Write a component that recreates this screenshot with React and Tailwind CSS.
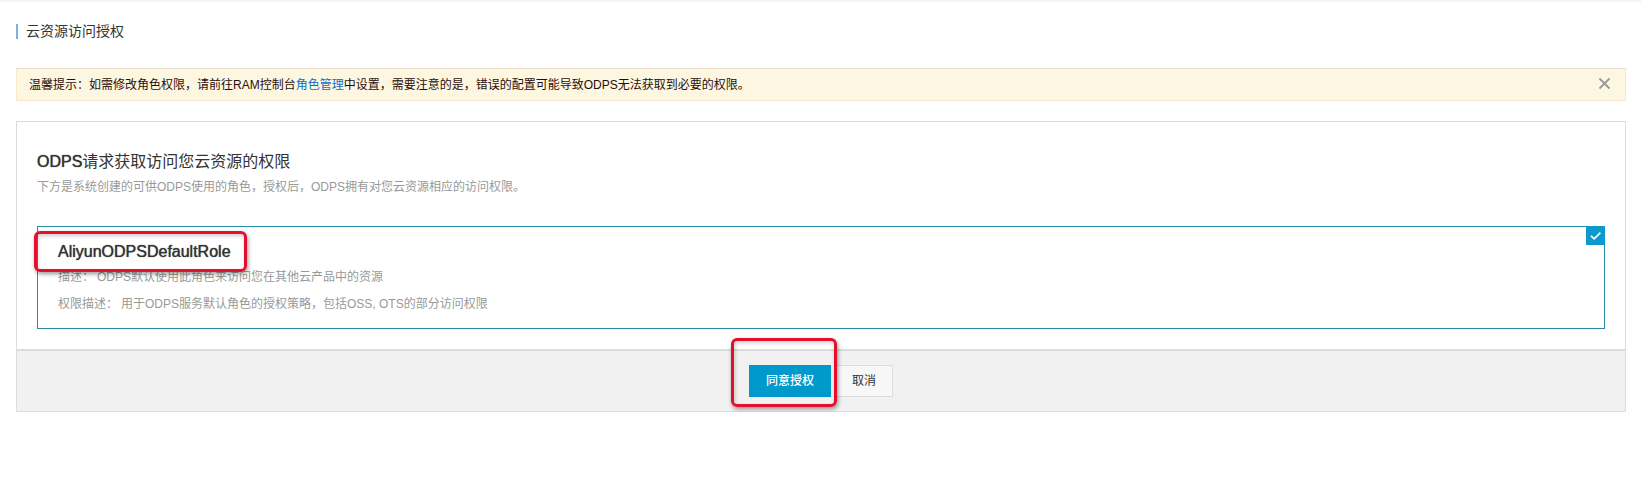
import React from "react";

function Highlight({ className }) {
  return (
    <span
      aria-hidden="true"
      className={`pointer-events-none absolute rounded-md border-3 border-[#e3102b] shadow-[1px_2px_4px_rgba(0,0,0,0.4),inset_1px_2px_4px_rgba(0,0,0,0.2)] ${className}`}
    />
  );
}

function Notice() {
  return (
    <div
      role="alert"
      className="mt-[27px] flex items-center justify-between border border-[#f7eacb] border-t-[#e6dcc9] bg-[#fdf7e2] pt-[7px] pb-[5px] pl-3 pr-[14px]"
    >
      <p className="text-xs leading-[19px] text-[#2b0d08]">
        温馨提示：如需修改角色权限，请前往RAM控制台
        <a href="#roles" className="text-[#0a6fc9]">角色管理</a>
        中设置，需要注意的是，错误的配置可能导致ODPS无法获取到必要的权限。
      </p>
      <button type="button" aria-label="关闭" className="pb-1 text-[#999]">
        <svg width="13" height="13" viewBox="0 0 13 13" fill="none" stroke="currentColor" strokeWidth="1.8">
          <path d="M1.5 1.5 11.5 11.5M11.5 1.5 1.5 11.5" />
        </svg>
      </button>
    </div>
  );
}

function RoleCard() {
  return (
    <section className="relative mt-[30px] border border-[#2a8ba6] px-5 pt-[13px] pb-[10px]">
      <h3 className="text-base leading-6 text-[#333] [text-shadow:0_0_1px_#333]">AliyunODPSDefaultRole</h3>
      <p className="text-xs leading-[27px] text-[#999]">
        描述：<span className="ml-[3px]">ODPS默认使用此角色来访问您在其他云产品中的资源</span>
      </p>
      <p className="text-xs leading-[27px] text-[#999]">
        权限描述：<span className="ml-[3px]">用于ODPS服务默认角色的授权策略，包括OSS, OTS的部分访问权限</span>
      </p>
      <span className="absolute -top-px -right-px flex size-[19px] items-center justify-center bg-[#0d9acb]">
        <svg width="12" height="10" viewBox="0 0 12 10" fill="none" stroke="#fff" strokeWidth="1.8">
          <path d="M1 4.8 4.2 7.8 10.4 1.6" />
        </svg>
      </span>
      <Highlight className="-left-1 top-1 h-[41px] w-[213px]" />
    </section>
  );
}

export default function App() {
  return (
    <main className="border-t-2 border-[#f3f3f3] bg-white pl-4 pr-[15px] pb-20 pt-[19px] font-['Liberation_Sans','Noto_Sans_CJK_SC',sans-serif]">
      <div className="flex items-center gap-2">
        <span className="h-[15px] w-[2px] bg-[#7fb1dc]" />
        <h1 className="text-sm leading-5 text-[#333]">云资源访问授权</h1>
      </div>

      <Notice />

      <div className="mt-5 border border-[#dcdcdc]">
        <div className="px-5 pt-7 pb-5">
          <h2 className="text-base leading-6 text-[#333]">
            <span className="[text-shadow:0_0_1px_#333]">ODPS</span>请求获取访问您云资源的权限
          </h2>
          <p className="mt-1 text-xs leading-[18px] text-[#999]">
            下方是系统创建的可供ODPS使用的角色，授权后，ODPS拥有对您云资源相应的访问权限。
          </p>
          <RoleCard />
        </div>
        <footer className="flex justify-center gap-1 border-t-2 border-[#dcdcdc] bg-[#f1f1f1] py-[14px]">
          <div className="relative">
            <button type="button" className="block h-8 bg-[#0099cc] px-[17px] text-xs font-medium text-white">
              同意授权
            </button>
            <Highlight className="-left-[18px] -top-[27px] h-[69px] w-[106px]" />
          </div>
          <button type="button" className="h-8 border border-[#dcdcdc] bg-[#f7f7f7] px-4 text-xs text-[#333]">
            取消
          </button>
        </footer>
      </div>
    </main>
  );
}
